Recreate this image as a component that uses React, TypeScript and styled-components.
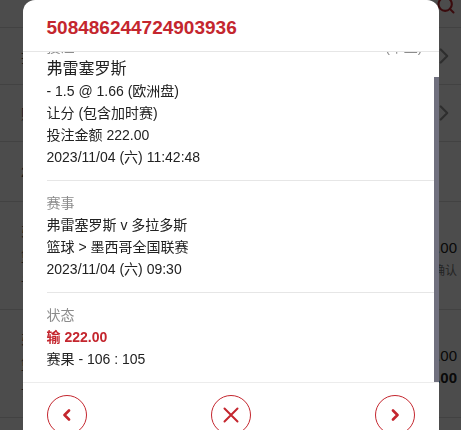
import { useLayoutEffect, useRef, useState } from "react";
import styled, { createGlobalStyle } from "styled-components";
import { ChevronRight, Search } from "lucide-react";

const RED = "#c4262e";

const GlobalStyle = createGlobalStyle`
  html, body {
    margin: 0;
    padding: 0;
    height: 100%;
    overflow: hidden;
  }
  body {
    font-family: "Liberation Sans", "Noto Sans CJK SC", sans-serif;
    background: #fff;
    color: #222;
  }
`;

// ---- page underneath the dialog ----

const Page = styled.div`
  background: #fff;
`;

const TopBar = styled.div`
  height: 28px;
  border-bottom: 1px solid #dcdcdc;
  box-sizing: border-box;
  display: flex;
  justify-content: flex-end;
  padding-right: 5px;
  color: ${RED};
  svg {
    margin-top: -5px;
  }
`;

const Row = styled.div<{ $h: number }>`
  height: ${(p) => p.$h}px;
  box-sizing: border-box;
  border-bottom: 1px solid #dcdcdc;
  display: flex;
  align-items: center;
  justify-content: space-between;
  padding: 0 4px 0 21px;
  font-size: 14px;
  color: #555;
`;

const RowLeft = styled.div`
  display: flex;
  flex-direction: column;
  gap: 6px;
`;

const RowRight = styled.div`
  display: flex;
  flex-direction: column;
  align-items: flex-end;
  gap: 5px;
  padding-top: 6px;
  color: #999;
`;

const Amount = styled.span<{ $bold?: boolean }>`
  font-size: 15px;
  color: #222;
  font-weight: ${(p) => (p.$bold ? 700 : 400)};
`;

const Small = styled.span`
  font-size: 12px;
  color: #777;
`;

// ---- dialog ----

const Overlay = styled.div`
  position: fixed;
  inset: 0;
  background: rgba(0, 0, 0, 0.7);
  display: flex;
  justify-content: center;
  align-items: flex-start;
`;

const Dialog = styled.div`
  width: 416px;
  background: #fff;
  border-radius: 12px 12px 0 0;
  display: flex;
  flex-direction: column;
`;

const Header = styled.div`
  height: 52px;
  box-sizing: border-box;
  border-bottom: 1px solid #e6e6e6;
  display: flex;
  align-items: center;
  padding: 4px 24px 0;
`;

const Title = styled.h2`
  margin: 0;
  font-size: 19px;
  font-weight: 700;
  color: ${RED};
`;

const BodyWrap = styled.div`
  position: relative;
  height: 330px;
`;

const Body = styled.div`
  height: 100%;
  overflow-y: auto;
  &::-webkit-scrollbar {
    width: 0;
    height: 0;
  }
`;

const Thumb = styled.div`
  position: absolute;
  right: 0;
  width: 5px;
  background: #70707e;
  pointer-events: none;
`;

const Section = styled.section<{ $last?: boolean }>`
  margin-left: 24px;
  padding: 11px 16px 12px 0;
  border-bottom: ${(p) => (p.$last ? "none" : "1px solid #e6e6e6")};
`;

const LabelRow = styled.div`
  display: flex;
  justify-content: space-between;
  line-height: 22px;
  font-size: 14px;
  color: #8c8c8c;
`;

const Line = styled.div<{ $big?: boolean; $red?: boolean }>`
  line-height: 22px;
  font-size: ${(p) => (p.$big ? 16 : 14)}px;
  color: ${(p) => (p.$red ? RED : "#222")};
  font-weight: ${(p) => (p.$red ? 700 : 400)};
`;

const Footer = styled.div`
  border-top: 1px solid #ececec;
  padding: 12px 24px;
  display: flex;
  justify-content: space-between;
`;

const CircleButton = styled.button`
  width: 40px;
  height: 40px;
  border-radius: 50%;
  border: 1px solid ${RED};
  background: #fff;
  padding: 0;
  display: flex;
  align-items: center;
  justify-content: center;
  color: ${RED};
  cursor: pointer;
`;

function Chevron({ dir }: { dir: "left" | "right" }) {
  return (
    <svg width="10" height="12" viewBox="0 0 10 12" fill="none">
      <path
        d={dir === "left" ? "M7 1.5 L2.5 6 L7 10.5" : "M3 1.5 L7.5 6 L3 10.5"}
        stroke="currentColor"
        strokeWidth="2.6"
        strokeLinecap="round"
        strokeLinejoin="round"
      />
    </svg>
  );
}

function Cross() {
  return (
    <svg width="16" height="16" viewBox="0 0 16 16" fill="none">
      <path d="M1.5 1.5 L14.5 14.5 M14.5 1.5 L1.5 14.5" stroke="currentColor" strokeWidth="2" strokeLinecap="round" />
    </svg>
  );
}

export default function App() {
  const bodyRef = useRef<HTMLDivElement>(null);
  const [thumb, setThumb] = useState({ top: 0, height: 0 });

  useLayoutEffect(() => {
    const el = bodyRef.current;
    if (!el) return;
    el.scrollTop = el.scrollHeight;
    const update = () => {
      const { scrollTop, scrollHeight, clientHeight } = el;
      if (scrollHeight <= clientHeight) return setThumb({ top: 0, height: 0 });
      setThumb({
        top: (scrollTop / scrollHeight) * clientHeight,
        height: (clientHeight / scrollHeight) * clientHeight,
      });
    };
    update();
    el.addEventListener("scroll", update);
    return () => el.removeEventListener("scroll", update);
  }, []);

  return (
    <>
      <GlobalStyle />
      <Page>
        <TopBar>
          <Search size={20} strokeWidth={2.5} />
        </TopBar>
        <Row $h={57}>
          <RowLeft>投注记录</RowLeft>
          <ChevronRight size={26} color="#999" />
        </Row>
        <Row $h={57}>
          <RowLeft>账户历史</RowLeft>
          <ChevronRight size={26} color="#999" />
        </Row>
        <Row $h={60}>
          <RowLeft>2023/11/04</RowLeft>
        </Row>
        <Row $h={108}>
          <RowLeft>
            <span>弗雷塞罗斯</span>
            <span>篮球</span>
            <span>让分</span>
          </RowLeft>
          <RowRight>
            <Amount>222.00</Amount>
            <Small>已确认</Small>
          </RowRight>
        </Row>
        <Row $h={108}>
          <RowLeft>
            <span>弗雷塞罗斯</span>
            <span>篮球</span>
            <span>让分</span>
          </RowLeft>
          <RowRight>
            <Amount>222.00</Amount>
            <Amount $bold>-222.00</Amount>
          </RowRight>
        </Row>
        <Row $h={60}>
          <RowLeft>2023/11/03</RowLeft>
        </Row>
      </Page>

      <Overlay>
        <Dialog>
          <Header>
            <Title>508486244724903936</Title>
          </Header>
          <BodyWrap>
            <Body ref={bodyRef}>
              <Section>
                <LabelRow>
                  <span>投注</span>
                  <span>(早盘)</span>
                </LabelRow>
                <Line $big>弗雷塞罗斯</Line>
                <Line>- 1.5 @ 1.66 (欧洲盘)</Line>
                <Line>让分 (包含加时赛)</Line>
                <Line>投注金额 222.00</Line>
                <Line>2023/11/04 (六) 11:42:48</Line>
              </Section>
              <Section>
                <LabelRow>
                  <span>赛事</span>
                </LabelRow>
                <Line>弗雷塞罗斯 v 多拉多斯</Line>
                <Line>篮球 &gt; 墨西哥全国联赛</Line>
                <Line>2023/11/04 (六) 09:30</Line>
              </Section>
              <Section $last>
                <LabelRow>
                  <span>状态</span>
                </LabelRow>
                <Line $red>输 222.00</Line>
                <Line>赛果 - 106 : 105</Line>
              </Section>
            </Body>
            <Thumb style={{ top: thumb.top, height: thumb.height }} />
          </BodyWrap>
          <Footer>
            <CircleButton aria-label="上一个">
              <Chevron dir="left" />
            </CircleButton>
            <CircleButton aria-label="关闭">
              <Cross />
            </CircleButton>
            <CircleButton aria-label="下一个">
              <Chevron dir="right" />
            </CircleButton>
          </Footer>
        </Dialog>
      </Overlay>
    </>
  );
}
